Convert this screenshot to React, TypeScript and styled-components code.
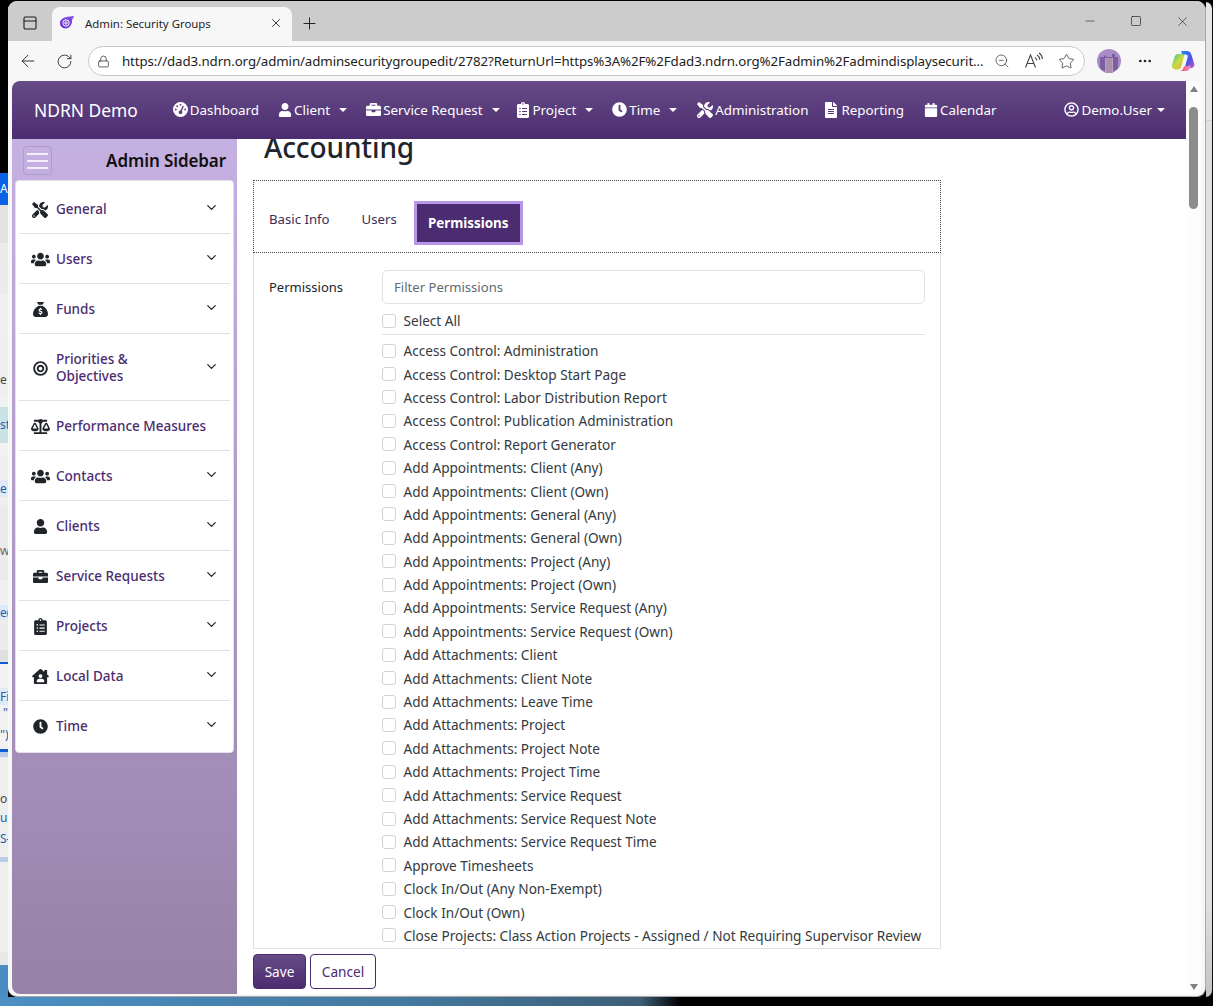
import React from 'react';
import styled, { createGlobalStyle } from 'styled-components';
import { ArrowLeft, RotateCw, Lock, X, Plus, Minus, Square, ZoomOut, Star, MoreHorizontal, PanelTop, ChevronDown } from 'lucide-react';
import { FaTools, FaUsers, FaBullseye, FaBalanceScale, FaUser, FaBriefcase, FaClipboardList, FaHouseUser, FaClock, FaFileAlt, FaCalendar, FaRegUserCircle } from 'react-icons/fa';
import { FaSackDollar, FaGaugeHigh } from 'react-icons/fa6';

const UI = `"Noto Sans", "Open Sans", sans-serif`;

const Global = createGlobalStyle`
  html, body { margin: 0; padding: 0; background: #000; }
  * { box-sizing: border-box; }
  body { font-family: ${UI}; font-size: 14px; }
`;

const Screen = styled.div`
  width: 1213px; height: 1006px; overflow: hidden; display: flex; flex-direction: column; background: #000;
`;
const TopRow = styled.div`display: flex; height: 997px; flex: none;`;
const DesktopStrip = styled.div`width: 8px; flex: none; display: flex; flex-direction: column; overflow: hidden;`;
const StripRow = styled.div<{ $h: number; $bg: string; $c?: string; $end?: boolean }>`
  height: ${p => p.$h}px; flex: none; background: ${p => p.$bg}; color: ${p => p.$c || '#444'};
  font-size: 12px; line-height: ${p => p.$h}px; white-space: nowrap; overflow: hidden; text-align: ${p => (p.$end ? 'right' : 'left')};
`;
const RightStrip = styled.div`
  width: 7px; flex: none; border-right: 1px solid #111; border-radius: 0 8px 8px 0; margin-top: 2px;
  background: linear-gradient(#e6e6e6 0 118px, #cfcfcf 118px 119px, #e0e0e0 119px 900px, #c4c4c4);
`;
const BottomStrip = styled.div`
  height: 9px; flex: none; background: linear-gradient(90deg, #4b8fc4 0, #44799f 400px, #3d5f78 640px, #000 680px);
`;
const Window = styled.div`
  width: 1198px; flex: none; margin-top: 1px; display: flex; flex-direction: column; background: #f7f7f7;
  border-radius: 9px; overflow: hidden; border-right: 1px solid #a8a8a8; border-bottom: 1px solid #a8a8a8;
`;
const TabStrip = styled.div`
  height: 40px; flex: none; background: #cccccc; display: flex; align-items: flex-end; color: #1a1a1a;
`;
const StripIcon = styled.div`width: 44px; height: 34px; display: flex; align-items: center; justify-content: center; padding: 0 0 2px 0;`;
const Tab = styled.div`
  width: 240px; height: 34px; background: #f7f7f7; border-radius: 8px 8px 0 0; display: flex; align-items: center;
  padding: 0 9px 2px 7px; font-size: 11.4px; color: #1f1f1f; gap: 10px;
`;
const TabTitle = styled.span`flex: 1;`;
const NewTab = styled.div`width: 34px; height: 34px; display: flex; align-items: center; justify-content: center; padding-bottom: 2px;`;
const WindowControls = styled.div`margin-left: auto; display: flex; height: 40px; align-items: center;`;
const WindowControl = styled.div`width: 46px; display: flex; justify-content: center;`;
const Toolbar = styled.div`
  height: 40px; flex: none; display: flex; align-items: center; padding-left: 2px; color: #222;
`;
const ToolButton = styled.div<{ $w?: number; $ml?: number }>`
  width: ${p => p.$w || 36}px; height: 32px; flex: none; margin-left: ${p => p.$ml || 0}px; display: flex; align-items: center; justify-content: center;
`;
const AddressBar = styled.div`
  margin-left: 6px; width: 997px; height: 30px; flex: none; border: 1px solid #c8c8c8; border-radius: 15px; background: #fff;
  display: flex; align-items: center; padding: 0 2px 0 8px; color: #333;
`;
const Url = styled.div`
  flex: 1; min-width: 0; padding-left: 12px; font-size: 13.3px; color: #1d1d1d; letter-spacing: -.1px; white-space: nowrap; overflow: hidden;
`;
const AddressIcon = styled.div`width: 32px; flex: none; display: flex; justify-content: center;`;
const Viewport = styled.div`
  flex: 1; min-height: 0; margin: 0 4px 2px; border-radius: 8px; background: #fff; overflow: hidden; display: flex;
`;
const Page = styled.div`flex: 1; min-width: 0; display: flex; flex-direction: column;`;
const Navbar = styled.nav`
  height: 58px; flex: none; background: linear-gradient(#664b86, #4c2c70); color: #fff; display: flex; align-items: center; padding: 0 21px 1px 22px;
`;
const Brand = styled.div`font-size: 17.4px; margin-right: 35px; white-space: nowrap;`;
const NavLink = styled.div<{ $mr?: number }>`
  display: flex; align-items: center; gap: 2px; font-size: 13.4px; margin-right: ${p => p.$mr ?? 20}px; white-space: nowrap;
  svg { flex: none; }
`;
const Caret = styled.span<{ $ml?: number }>`
  width: 0; height: 0; margin-left: ${p => p.$ml ?? 7}px; border-top: 4px solid #fff; border-left: 4px solid transparent; border-right: 4px solid transparent;
`;
const Spacer = styled.div`flex: 1;`;
const PageBody = styled.div`flex: 1; min-height: 0; display: flex;`;
const Sidebar = styled.aside`
  width: 225px; flex: none; background: linear-gradient(#c5b0e2, #9682a8); display: flex; flex-direction: column; padding: 7px 3px 0;
`;
const SidebarHead = styled.div`
  height: 29px; margin-bottom: 5px; flex: none; display: flex; align-items: center; justify-content: space-between; padding: 0 8px;
`;
const Hamburger = styled.div`
  width: 29px; height: 29px; border: 1px solid #b09acb; border-radius: 4px; display: flex; flex-direction: column; justify-content: center; gap: 5px; padding: 0 3px;
  span { display: block; height: 2px; background: #f3eefa; }
`;
const SidebarTitle = styled.div`font-size: 17px; font-weight: 600; color: #111; letter-spacing: -.1px;`;
const SideCard = styled.div`
  background: #fff; border-radius: 4px; border: 1px solid #e4e0ea; padding: 3px 3px 1px;
`;
const SideItem = styled.div<{ $tall?: boolean; $last?: boolean }>`
  height: ${p => (p.$tall ? 67 : 50)}px; display: flex; align-items: center; padding: 2px 11px 0 13px;
  border-bottom: 1px solid ${p => (p.$last ? 'transparent' : '#dee2e6')}; color: #4c2c70; font-size: 13.5px; font-weight: 500; line-height: 17px;
`;
const SideIcon = styled.div`
  width: 16px; margin-right: 8px; display: flex; justify-content: center; color: #212529; flex: none;
  svg { flex: none; }
`;
const SideLabel = styled.div<{ $chevron?: boolean }>`flex: 1; padding-right: ${p => (p.$chevron ? 20 : 0)}px; white-space: ${p => (p.$chevron ? 'normal' : 'nowrap')};`;
const SideChevron = styled(ChevronDown)`color: #212529; flex: none; margin-top: -4px;`;
const Main = styled.main`flex: 1; min-width: 0; display: flex; flex-direction: column; padding-left: 16px;`;
const TitleClip = styled.div`height: 41px; flex: none; overflow: hidden; padding-left: 11px;`;
const Title = styled.h1`margin: -11px 0 0; font-size: 28px; font-weight: 500; line-height: 38px; color: #212529; letter-spacing: -.12px;`;
const TabsBox = styled.div`
  width: 688px; height: 73px; flex: none; border: 1px dotted #444; display: flex; padding: 20px 0 0 15px;
`;
const TabLink = styled.div<{ $mr: number }>`
  color: #3d2c55; height: 36px; line-height: 36px; margin-right: ${p => p.$mr}px; font-size: 13.2px;
`;
const ActiveTab = styled.div`
  width: 109px; height: 44px; background: #4c2c70; border: 3px solid #b795e8; color: #fff; font-weight: 700; font-size: 13.4px;
  display: flex; align-items: center; justify-content: center;
`;
const FormPanel = styled.div`
  width: 688px; height: 696px; flex: none; border: 1px solid #dee2e6; border-top: 0; padding: 17px 15px 0; display: flex; overflow: hidden;
`;
const FieldLabel = styled.div`width: 113px; flex: none; color: #212529; font-size: 13px; line-height: 34px;`;
const FieldBody = styled.div`flex: 1; min-width: 0;`;
const Filter = styled.input`
  width: 100%; height: 34px; border: 1px solid #dee2e6; border-radius: 5px; padding: 0 11px; font-family: ${UI}; font-size: 13.1px; display: block; outline: none;
  &::placeholder { color: #636b73; opacity: 1; }
`;
const Check = styled.label<{ $all?: boolean }>`
  display: flex; align-items: center; height: ${p => (p.$all ? 31 : 23.4)}px; color: #343a40; font-size: 13.6px; white-space: nowrap;
  ${p => (p.$all ? 'border-bottom: 1px solid #dee2e6; margin-bottom: 4px; padding-top: 3px;' : '')}
`;
const Box = styled.span`
  width: 14px; height: 14px; flex: none; border: 1px solid #ced4da; border-radius: 3px; margin-right: 7.5px; background: #fff;
`;
const Footer = styled.div`display: flex; gap: 4px; padding-top: 5px;`;
const SaveButton = styled.button`
  width: 53px; height: 35px; border: 1px solid #4c2c70; border-radius: 4px; background: linear-gradient(#664b86, #4c2c70); color: #fff; font-family: ${UI}; font-size: 13.6px; padding: 0;
`;
const CancelButton = styled.button`
  width: 66px; height: 35px; border: 1px solid #4c2c70; border-radius: 4px; background: #fff; color: #4c2c70; font-family: ${UI}; font-size: 13.6px; padding: 0;
`;
const Scrollbar = styled.div`width: 15px; flex: none; background: #fdfdfd; display: flex; flex-direction: column; align-items: center; padding: 5px 0 4px;`;
const ScrollThumb = styled.div`width: 9px; height: 102px; margin-top: 15px; background: #8c8c8c; border-radius: 5px;`;
const ScrollSpace = styled.div`flex: 1;`;
const ArrowUp = styled.div`width: 0; height: 0; border-left: 4px solid transparent; border-right: 4px solid transparent; border-bottom: 6px solid #808080;`;
const ArrowDown = styled.div`width: 0; height: 0; border-left: 4px solid transparent; border-right: 4px solid transparent; border-top: 6px solid #808080;`;

const B = '#1c5fb0';
const strip: [number, string, string?, string?, boolean?][] = [
  [173, '#000'], [32, '#0b62e6', '#fff', 'Au'], [38, '#e3e3e3'], [51, '#ececec'], [41, '#f0f0f0'], [30, '#eeeeee'], [30, '#eeeeee', '#444', 'e i'],
  [12, '#f2f2f2'], [36, '#c8e2e6', B, 'st'], [12, '#f2f2f2'], [25, '#efefef'], [17, '#dfe9f7', B, 'e'], [8, '#efefef'],
  [33, '#ebebeb'], [26, '#ebebeb', '#666', 'w'], [16, '#ebebeb'], [25, '#f0f0f0'], [15, '#dfe9f7', B, 'e('], [30, '#ececec'],
  [12, '#e0e0e0'], [2, '#0b5fd0'], [24, '#f2f2f2'], [17, '#dfe9f7', B, 'Fi'], [16, '#f2f2f2', B, '"', true], [28, '#f2f2f2', B, '")'],
  [3, '#0b5fd0'], [5, '#b9cde6'], [33, '#eeeeee'], [18, '#eeeeee', '#444', 'ou'], [20, '#eeeeee', B, 'ul'], [21, '#eeeeee', B, 'S{'],
  [8, '#eeeeee'], [5, '#b9cde6'], [55, '#efefef'], [35, '#eeeeee'], [13, '#e8e8e8'], [32, '#4a8cc4'],
];

const perms = [
  'Access Control: Administration', 'Access Control: Desktop Start Page', 'Access Control: Labor Distribution Report',
  'Access Control: Publication Administration', 'Access Control: Report Generator', 'Add Appointments: Client (Any)',
  'Add Appointments: Client (Own)', 'Add Appointments: General (Any)', 'Add Appointments: General (Own)',
  'Add Appointments: Project (Any)', 'Add Appointments: Project (Own)', 'Add Appointments: Service Request (Any)',
  'Add Appointments: Service Request (Own)', 'Add Attachments: Client', 'Add Attachments: Client Note',
  'Add Attachments: Leave Time', 'Add Attachments: Project', 'Add Attachments: Project Note', 'Add Attachments: Project Time',
  'Add Attachments: Service Request', 'Add Attachments: Service Request Note', 'Add Attachments: Service Request Time',
  'Approve Timesheets', 'Clock In/Out (Any Non-Exempt)', 'Clock In/Out (Own)',
  'Close Projects: Class Action Projects - Assigned / Not Requiring Supervisor Review',
];

const side: { label: string; icon: React.ReactNode; chevron?: boolean; tall?: boolean }[] = [
  { label: 'General', icon: <FaTools size={16} />, chevron: true },
  { label: 'Users', icon: <FaUsers size={19} />, chevron: true },
  { label: 'Funds', icon: <FaSackDollar size={15} />, chevron: true },
  { label: 'Priorities & Objectives', icon: <FaBullseye size={15} />, chevron: true, tall: true },
  { label: 'Performance Measures', icon: <FaBalanceScale size={19} /> },
  { label: 'Contacts', icon: <FaUsers size={19} />, chevron: true },
  { label: 'Clients', icon: <FaUser size={15} />, chevron: true },
  { label: 'Service Requests', icon: <FaBriefcase size={15} />, chevron: true },
  { label: 'Projects', icon: <FaClipboardList size={17} />, chevron: true },
  { label: 'Local Data', icon: <FaHouseUser size={17} />, chevron: true },
  { label: 'Time', icon: <FaClock size={15} />, chevron: true },
];

const EdgeTabLogo = () => (
  <svg width="16" height="16" viewBox="0 0 16 16">
    <defs><linearGradient id="tl" x1="0" y1="1" x2="1" y2="0"><stop offset="0" stopColor="#5a22d8" /><stop offset="1" stopColor="#8a55ea" /></linearGradient></defs>
    <path d="M7 2.2c2.600-.8 5.200-.6 8-1.400-.5 1.800-1.100 3-2 4 .6 3.700-1.700 8.400-6 8.600C3.500 13.600 1 11.200 1 8c0-2.700 2.400-5.100 6-5.800z" fill="url(#tl)" />
    <circle cx="7" cy="8" r="3.200" fill="none" stroke="#fff" strokeWidth="1" />
    <circle cx="7" cy="8" r="1.200" fill="none" stroke="#fff" strokeWidth="1" />
  </svg>
);
const ReadAloud = () => (
  <svg width="20" height="18" viewBox="0 0 20 18" fill="none" stroke="#444" strokeWidth="1.100">
    <path d="M1.500 15.500 6.500 3l5 12.500M3.200 11.500h6.600" />
    <path d="M11 5.500c1 .6 1.700 1.700 1.800 3M13 3c1.700 1 2.700 2.800 2.800 4.700M15 1c2 1.300 3.300 3.600 3.400 6" />
  </svg>
);
const ProfileAvatar = () => (
  <svg width="24" height="24" viewBox="0 0 24 24">
    <circle cx="12" cy="12" r="12" fill="#a98bc8" />
    <path d="M3 8h4v-1.500h2V8h6V5h3v3h3v11a12 12 0 0 1-18 0z" fill="#7a5ea0" />
    <rect x="8" y="9" width="8" height="15" fill="#b9a0b8" />
    <path d="M10 9v15M12 9v15M14 9v15" stroke="#94799f" strokeWidth=".8" />
  </svg>
);
const CopilotLogo = () => (
  <svg width="24" height="24" viewBox="0 0 24 24">
    <defs>
      <linearGradient id="c1" x1="0" y1="0" x2="1" y2="1"><stop offset="0" stopColor="#2fc7a0" /><stop offset=".5" stopColor="#c9dc3c" /><stop offset="1" stopColor="#f6a13c" /></linearGradient>
      <linearGradient id="c2" x1="0" y1="0" x2="1" y2="1"><stop offset="0" stopColor="#1c8ff0" /><stop offset=".6" stopColor="#5050e8" /><stop offset="1" stopColor="#d85ac0" /></linearGradient>
      <linearGradient id="c3" x1="0" y1="0" x2="1" y2="0"><stop offset="0" stopColor="#f6483c" /><stop offset="1" stopColor="#f08ad0" /></linearGradient>
    </defs>
    <path d="M7 5h6.500L10.500 17c-.5 2-2 3.500-4.500 3.500H5C2 20.500.5 18 1.200 15.500L3.500 8C4.200 6 5.500 5 7 5z" fill="url(#c1)" />
    <path d="M10 2h6c2 0 3.500 1.200 4.200 3l3 9.500c.8 2.500-.8 4.500-3.500 4.500h-6l3-11c.4-1.500-.5-2.500-2-2.500h-3.200C10.800 4.500 10.500 3 10 2z" fill="url(#c2)" />
    <path d="M7 22h8c2 0 3.500-1 4-3l.6-2.500-6.600 1-1.500 3c-.8 1-2 1.500-4.500 1.500z" fill="url(#c3)" />
  </svg>
);

export default function App() {
  return (
    <Screen>
      <Global />
      <TopRow>
        <DesktopStrip>
          {strip.map(([h, bg, c, t, e], i) => (
            <StripRow key={i} $h={h} $bg={bg} $c={c} $end={e}>{t}</StripRow>
          ))}
        </DesktopStrip>
        <Window>
          <TabStrip>
            <StripIcon><PanelTop size={16} strokeWidth={1.6} /></StripIcon>
            <Tab>
              <EdgeTabLogo />
              <TabTitle>Admin: Security Groups</TabTitle>
              <X size={14} strokeWidth={1.5} />
            </Tab>
            <NewTab><Plus size={19} strokeWidth={1.2} /></NewTab>
            <WindowControls>
              <WindowControl><Minus size={14} strokeWidth={1} /></WindowControl>
              <WindowControl><Square size={12} strokeWidth={1.3} /></WindowControl>
              <WindowControl><X size={15} strokeWidth={1} /></WindowControl>
            </WindowControls>
          </TabStrip>
          <Toolbar>
            <ToolButton><ArrowLeft size={20} strokeWidth={1.1} /></ToolButton>
            <ToolButton><RotateCw size={17} strokeWidth={1.2} /></ToolButton>
            <AddressBar>
              <Lock size={13} strokeWidth={1.4} />
              <Url>https://dad3.ndrn.org/admin/adminsecuritygroupedit/2782?ReturnUrl=https%3A%2F%2Fdad3.ndrn.org%2Fadmin%2Fadmindisplaysecurit...</Url>
              <AddressIcon><ZoomOut size={16} strokeWidth={1.1} /></AddressIcon>
              <AddressIcon><ReadAloud /></AddressIcon>
              <AddressIcon><Star size={17} strokeWidth={1.1} /></AddressIcon>
            </AddressBar>
            <ToolButton $w={48}><ProfileAvatar /></ToolButton>
            <ToolButton $w={24}><MoreHorizontal size={16} /></ToolButton>
            <ToolButton $w={32} $ml={10}><CopilotLogo /></ToolButton>
          </Toolbar>
          <Viewport>
            <Page>
              <Navbar>
                <Brand>NDRN Demo</Brand>
                <NavLink $mr={19}><FaGaugeHigh size={15} />Dashboard</NavLink>
                <NavLink $mr={19}><FaUser size={14} />Client<Caret /></NavLink>
                <NavLink $mr={15}><FaBriefcase size={15} />Service Request<Caret /></NavLink>
                <NavLink $mr={19}><FaClipboardList size={16} />Project<Caret /></NavLink>
                <NavLink $mr={20}><FaClock size={15} />Time<Caret /></NavLink>
                <NavLink $mr={15}><FaTools size={16} />Administration</NavLink>
                <NavLink $mr={20}><FaFileAlt size={16} />Reporting</NavLink>
                <NavLink><FaCalendar size={14} />Calendar</NavLink>
                <Spacer />
                <NavLink $mr={0}><FaRegUserCircle size={15} />Demo.User<Caret $ml={3} /></NavLink>
              </Navbar>
              <PageBody>
                <Sidebar>
                  <SidebarHead>
                    <Hamburger><span /><span /><span /></Hamburger>
                    <SidebarTitle>Admin Sidebar</SidebarTitle>
                  </SidebarHead>
                  <SideCard>
                    {side.map((s, i) => (
                      <SideItem key={s.label} $tall={s.tall} $last={i === side.length - 1}>
                        <SideIcon>{s.icon}</SideIcon>
                        <SideLabel $chevron={s.chevron}>{s.label}</SideLabel>
                        {s.chevron && <SideChevron size={15} strokeWidth={2} />}
                      </SideItem>
                    ))}
                  </SideCard>
                </Sidebar>
                <Main>
                  <TitleClip><Title>Accounting</Title></TitleClip>
                  <TabsBox>
                    <TabLink $mr={32}>Basic Info</TabLink>
                    <TabLink $mr={17}>Users</TabLink>
                    <ActiveTab>Permissions</ActiveTab>
                  </TabsBox>
                  <FormPanel>
                    <FieldLabel>Permissions</FieldLabel>
                    <FieldBody>
                      <Filter placeholder="Filter Permissions" readOnly />
                      <Check $all><Box />Select All</Check>
                      {perms.map(p => (<Check key={p}><Box />{p}</Check>))}
                    </FieldBody>
                  </FormPanel>
                  <Footer>
                    <SaveButton>Save</SaveButton>
                    <CancelButton>Cancel</CancelButton>
                  </Footer>
                </Main>
              </PageBody>
            </Page>
            <Scrollbar>
              <ArrowUp />
              <ScrollThumb />
              <ScrollSpace />
              <ArrowDown />
            </Scrollbar>
          </Viewport>
        </Window>
        <RightStrip />
      </TopRow>
      <BottomStrip />
    </Screen>
  );
}
